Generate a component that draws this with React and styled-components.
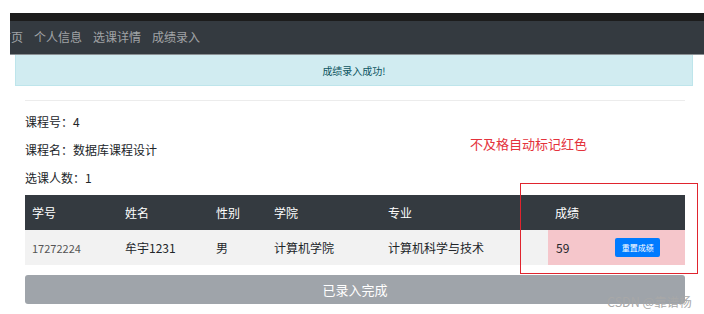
import React from 'react';
import styled, { createGlobalStyle } from 'styled-components';

const GlobalStyle = createGlobalStyle`
	body {
		margin: 0;
		background: #fff;
		font-family: "Noto Sans CJK SC", "Noto Sans", sans-serif;
		color: #212529;
	}
`;

const Page = styled.div`
	position: relative;
	width: 704px;
	height: 314px;
	overflow: hidden;
	padding-top: 13px;
	box-sizing: border-box;
`;

const TopBar = styled.div`
	margin-left: 10px;
	height: 8px;
	background: #1c1c1c;
`;

const NavBar = styled.nav`
	margin-left: 10px;
	height: 34px;
	background: #343a40;
	display: flex;
	align-items: center;
	gap: 11px;
	overflow: hidden;
	border-bottom: 1px solid #8a9094;
	box-sizing: border-box;
`;

const NavLink = styled.a`
	flex-shrink: 0;
	font-size: 12px;
	line-height: 1;
	color: rgba(255, 255, 255, 0.55);
	white-space: nowrap;
	margin-left: ${p => (p.$cut ? '-11px' : '0')};
	margin-top: -2px;
`;

const Alert = styled.div`
	margin: 0 11px 0 15px;
	height: 31px;
	background: #d1ecf1;
	border: 1px solid #bee5eb;
	border-top: none;
	box-sizing: border-box;
	display: flex;
	align-items: center;
	justify-content: center;
	font-size: 10px;
	color: #0c5460;
`;

const Container = styled.div`
	margin: 0 19px 0 25px;
`;

const Rule = styled.hr`
	margin: 14px 0 7px;
	border: none;
	border-top: 1px solid #ececec;
`;

const InfoLine = styled.p`
	margin: 0;
	height: 28px;
	line-height: 27px;
	font-size: 12px;
	color: #212529;
`;

const Table = styled.table`
	margin-top: 3px;
	width: 660px;
	border-collapse: collapse;
	table-layout: fixed;
	font-size: 12px;
`;

const Th = styled.th`
	height: 35px;
	padding: 0 7px;
	background: #343a40;
	color: #fff;
	font-weight: normal;
	text-align: left;
	width: ${p => p.$w}px;
	box-sizing: border-box;
`;

const Td = styled.td`
	height: 35px;
	padding: 0 7px;
	background: ${p => (p.$fail ? '#f5c6cb' : '#f2f2f2')};
	color: ${p => (p.$muted ? '#555' : '#212529')};
	font-size: ${p => (p.$muted ? '11px' : '12px')};
`;

const ScoreCell = styled.div`
	display: flex;
	align-items: center;
	gap: 46px;
	padding-left: 1px;
`;

const ResetButton = styled.button`
	width: 45px;
	height: 19px;
	padding: 0;
	border: none;
	border-radius: 2px;
	background: #007bff;
	color: #fff;
	font-family: inherit;
	font-size: 8px;
`;

const DoneButton = styled.button`
	margin-top: 10px;
	width: 660px;
	height: 29px;
	border: none;
	border-radius: 3px;
	background: #9fa4aa;
	color: #fff;
	font-family: inherit;
	font-size: 13px;
`;

const Note = styled.div`
	position: absolute;
	left: 470px;
	top: 134px;
	font-size: 13px;
	color: #e4323c;
`;

const Highlight = styled.div`
	position: absolute;
	left: 520px;
	top: 183px;
	width: 178px;
	height: 91px;
	border: 1.5px solid #e0242e;
	box-sizing: border-box;
`;

const Watermark = styled.div`
	position: absolute;
	left: 607px;
	top: 292px;
	font-size: 12.5px;
	color: #a8a8a8;
	white-space: nowrap;
`;

const columns = [
	{ title: '学号', w: 93 },
	{ title: '姓名', w: 91 },
	{ title: '性别', w: 58 },
	{ title: '学院', w: 114 },
	{ title: '专业', w: 167 },
	{ title: '成绩', w: 137 }
];

export default function App() {
	return (
		<Page>
			<GlobalStyle />
			<TopBar />
			<NavBar>
				<NavLink $cut>首页</NavLink>
				<NavLink>个人信息</NavLink>
				<NavLink>选课详情</NavLink>
				<NavLink>成绩录入</NavLink>
			</NavBar>
			<Alert>成绩录入成功!</Alert>
			<Container>
				<Rule />
				<InfoLine>课程号：4</InfoLine>
				<InfoLine>课程名：数据库课程设计</InfoLine>
				<InfoLine>选课人数：1</InfoLine>
				<Table>
					<thead>
						<tr>
							{columns.map(c => (
								<Th key={c.title} $w={c.w}>{c.title}</Th>
							))}
						</tr>
					</thead>
					<tbody>
						<tr>
							<Td $muted>17272224</Td>
							<Td>牟宇1231</Td>
							<Td>男</Td>
							<Td>计算机学院</Td>
							<Td>计算机科学与技术</Td>
							<Td $fail>
								<ScoreCell>
									<span>59</span>
									<ResetButton>重置成绩</ResetButton>
								</ScoreCell>
							</Td>
						</tr>
					</tbody>
				</Table>
				<DoneButton>已录入完成</DoneButton>
			</Container>
			<Note>不及格自动标记红色</Note>
			<Highlight />
			<Watermark>CSDN @靠谱杨</Watermark>
		</Page>
	);
}
